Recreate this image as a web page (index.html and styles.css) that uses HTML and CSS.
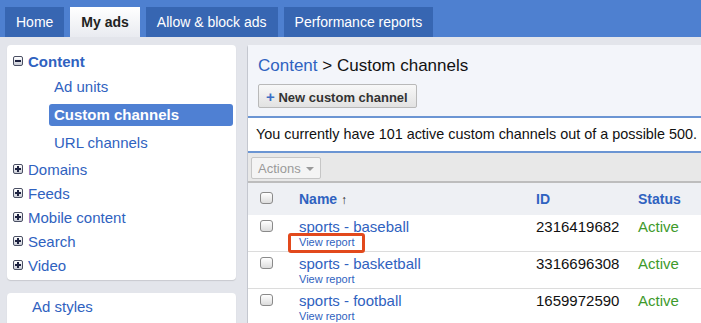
FILE: index.html
```html
<!DOCTYPE html>
<html>

<head>
    <title>AdSense - Custom channels</title>
    <meta charset="UTF-8">
    <link rel="stylesheet" href="styles.css">
</head>

<body>
    <div class="topbar">
        <a class="tab">Home</a>
        <a class="tab active">My ads</a>
        <a class="tab">Allow &amp; block ads</a>
        <a class="tab">Performance reports</a>
    </div>

    <div class="main">
        <div class="side">
            <div class="panel nav">
                <div class="nav-item open"><span class="toggle minus"></span>Content</div>
                <div class="sub">
                    <div class="sub-item">Ad units</div>
                    <div class="sub-item selected">Custom channels</div>
                    <div class="sub-item">URL channels</div>
                </div>
                <div class="nav-item"><span class="toggle plus"></span>Domains</div>
                <div class="nav-item"><span class="toggle plus"></span>Feeds</div>
                <div class="nav-item"><span class="toggle plus"></span>Mobile content</div>
                <div class="nav-item"><span class="toggle plus"></span>Search</div>
                <div class="nav-item"><span class="toggle plus"></span>Video</div>
            </div>
            <div class="panel styles-box">Ad styles</div>
        </div>

        <div class="content">
            <div class="content-head">
                <div class="crumbs"><a>Content</a> &gt; Custom channels</div>
                <button class="btn-new"><span class="plus-sign">+</span> New custom channel</button>
            </div>
            <div class="notice">You currently have 101 active custom channels out of a possible 500.</div>
            <div class="toolbar">
                <button class="btn-actions">Actions <span class="caret"></span></button>
            </div>
            <table class="channels">
                <thead>
                    <tr>
                        <th class="col-check"><span class="check"></span></th>
                        <th class="col-name">Name <span class="sort">&#x2191;</span></th>
                        <th class="col-id">ID</th>
                        <th class="col-status">Status</th>
                    </tr>
                </thead>
                <tbody>
                    <tr>
                        <td class="col-check"><span class="check"></span></td>
                        <td class="col-name">
                            <a class="name">sports - baseball</a>
                            <a class="report">View report</a>
                            <span class="callout"></span>
                        </td>
                        <td class="col-id">2316419682</td>
                        <td class="col-status">Active</td>
                    </tr>
                    <tr>
                        <td class="col-check"><span class="check"></span></td>
                        <td class="col-name">
                            <a class="name">sports - basketball</a>
                            <a class="report">View report</a>
                        </td>
                        <td class="col-id">3316696308</td>
                        <td class="col-status">Active</td>
                    </tr>
                    <tr>
                        <td class="col-check"><span class="check"></span></td>
                        <td class="col-name">
                            <a class="name">sports - football</a>
                            <a class="report">View report</a>
                        </td>
                        <td class="col-id">1659972590</td>
                        <td class="col-status">Active</td>
                    </tr>
                </tbody>
            </table>
        </div>
    </div>
</body>

</html>
```

FILE: styles.css
```css
:root {
    --bar: #4e80d0;
    --tab: #3766b2;
    --link: #2f62c0;
    --page: #e3e5eb;
    --rule: #6b95d3;
}

body {
    font-family: "Liberation Sans", Arial, sans-serif;
    margin: 0;
    background: var(--page);
    color: #111;
    overflow: hidden;
    height: 323px;
}

/* top navigation */

.topbar {
    background: var(--bar);
    height: 37px;
    padding: 7px 0 0 5px;
    box-sizing: border-box;
    display: flex;
    gap: 6px;
}

.tab {
    background: var(--tab);
    color: #fff;
    font-size: 14px;
    line-height: 30px;
    padding: 0 11px;
}

.tab.active {
    background: linear-gradient(#ffffff, #e9ebf0);
    color: #222;
    font-weight: bold;
}

.main {
    display: flex;
    gap: 11px;
    padding: 8px 0 0 7px;
}

/* left column */

.side {
    width: 229px;
    flex-shrink: 0;
    display: flex;
    flex-direction: column;
    gap: 13px;
}

.panel {
    background: #fff;
    border-radius: 4px;
    box-shadow: 0 1px 1px rgba(0, 0, 0, 0.12);
}

.nav {
    padding: 4px 3px 3px 0;
}

.nav-item {
    display: flex;
    align-items: center;
    height: 24px;
    padding-left: 6px;
    font-size: 15px;
    color: var(--link);
}

.nav-item.open {
    font-weight: bold;
}

.toggle {
    width: 8px;
    height: 8px;
    border: 1px solid #4a4f63;
    border-radius: 2px;
    background: linear-gradient(#ffffff, #c9ccd6);
    margin-right: 5px;
    position: relative;
}

.toggle::before,
.plus::after {
    content: "";
    position: absolute;
    background: #1d2240;
}

.toggle::before {
    left: 1px;
    right: 1px;
    top: 3px;
    height: 2px;
}

.plus::after {
    top: 1px;
    bottom: 1px;
    left: 3px;
    width: 2px;
}

.sub {
    padding-left: 42px;
}

.sub-item {
    height: 28px;
    line-height: 28px;
    font-size: 15px;
    color: var(--link);
    padding-left: 5px;
}

.sub-item.selected {
    background: #4f80d3;
    color: #fff;
    font-weight: bold;
    height: 22px;
    line-height: 22px;
    margin: 3px 0;
    border-radius: 3px;
}

.styles-box {
    font-size: 15px;
    color: var(--link);
    padding: 5px 25px 20px;
}

/* right column */

.content {
    width: 470px;
    flex-shrink: 0;
    background: #fff;
    border-left: 1px solid #c4c7cf;
    border-radius: 3px 0 0 0;
}

.content-head {
    background: #f3f5fa;
    padding: 10px 10px 8px;
}

.crumbs {
    font-size: 17px;
    line-height: 22px;
    color: #111;
}

.crumbs a {
    color: var(--link);
}

.btn-new {
    margin-top: 7px;
    height: 24px;
    padding: 0 8px 0 7px;
    font-family: inherit;
    font-size: 13px;
    font-weight: bold;
    color: #333;
    background: linear-gradient(#f8f8f8, #e2e2e2);
    border: 1px solid #b9b9b9;
    border-radius: 2px;
}

.plus-sign {
    color: #3c6ec4;
    font-size: 15px;
}

.notice {
    border-top: 2px solid var(--rule);
    border-bottom: 2px solid var(--rule);
    font-size: 14.4px;
    line-height: 33px;
    padding-left: 8px;
    white-space: nowrap;
}

.toolbar {
    background: #e8e8e8;
    border-bottom: 2px solid #bdbdbd;
    height: 30px;
    padding: 4px 0 0 3px;
    box-sizing: border-box;
}

.btn-actions {
    height: 22px;
    padding: 0 6px;
    font-family: inherit;
    font-size: 13px;
    color: #9a9a9a;
    background: #f4f4f4;
    border: 1px solid #c6c6c6;
    border-radius: 2px;
}

.caret {
    display: inline-block;
    border-left: 4px solid transparent;
    border-right: 4px solid transparent;
    border-top: 4px solid #9a9a9a;
    vertical-align: middle;
    margin-left: 2px;
}

/* table */

.channels {
    border-collapse: collapse;
    width: 100%;
}

.channels th {
    background: #eef0f4;
    height: 32px;
    font-size: 14px;
    font-weight: bold;
    color: var(--link);
    text-align: left;
    vertical-align: middle;
    padding: 0;
}

.channels td {
    vertical-align: top;
    padding: 3px 0 2px;
    font-size: 15px;
    border-bottom: 1px solid #dcdcdc;
}

.col-check {
    width: 39px;
    padding-left: 12px !important;
}

.col-name {
    width: 237px;
    position: relative;
}

.col-id {
    width: 102px;
    line-height: 18px;
}

.col-status {
    color: #3e9a2c;
    line-height: 18px;
}

.channels th.col-status {
    color: var(--link);
}

.sort {
    color: #222;
    font-size: 12px;
    font-weight: bold;
}

.check {
    display: inline-block;
    width: 11px;
    height: 10px;
    border: 1px solid #8a8a8a;
    border-radius: 3px;
    background: linear-gradient(#ffffff, #dcdcdc);
    margin-top: 2px;
}

.channels th .check {
    margin-top: 0;
}

.name {
    display: block;
    color: var(--link);
    line-height: 18px;
}

.report {
    display: block;
    color: var(--link);
    font-size: 11px;
    line-height: 13px;
}

.callout {
    position: absolute;
    left: -11px;
    top: 18px;
    width: 71px;
    height: 14px;
    border: 3px solid #e2491c;
    border-radius: 3px;
}
```
